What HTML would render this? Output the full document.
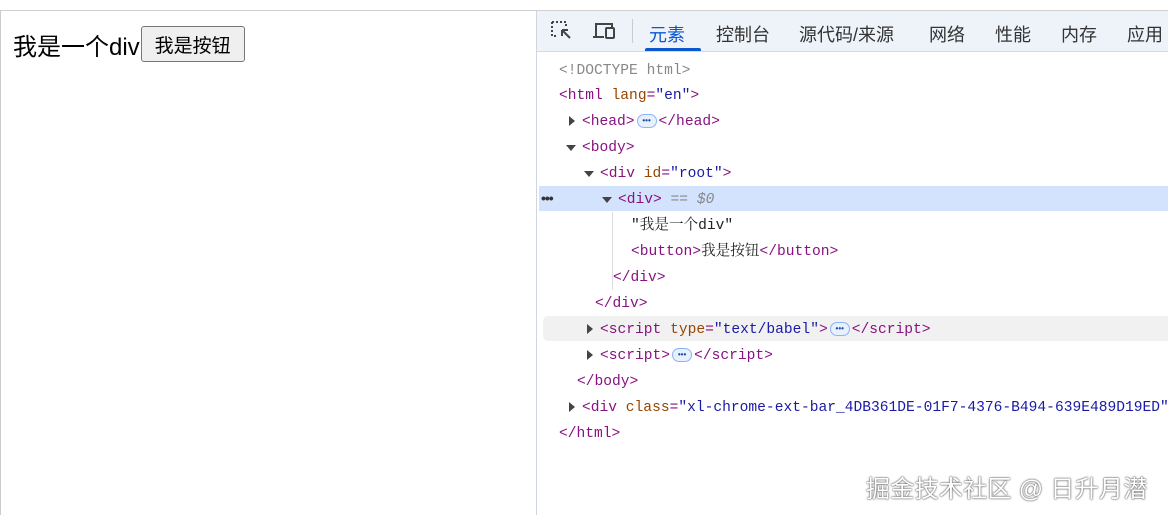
<!DOCTYPE html>
<html><head><meta charset="utf-8"><style>
body{margin:0;width:1168px;height:515px;overflow:hidden;background:#fff;position:relative;font-family:"Liberation Sans","Noto Sans CJK SC",sans-serif}
.topline{position:absolute;left:0;top:0;width:1168px;height:10px;border-bottom:1px solid #d0d0d0;background:#fff}
.leftline{position:absolute;left:0;top:10px;width:1px;height:505px;background:#ccc}
.page{position:absolute;left:13px;top:26px;font-size:24px;color:#000;display:flex;align-items:center;height:36px}
.btn{margin-left:1px;font-size:19px;width:104px;justify-content:center;border:1px solid #767676;border-radius:3px;background:#efefef;height:36px;box-sizing:border-box;display:flex;align-items:center}
.dev{position:absolute;left:536px;top:11px;width:632px;height:504px;border-left:1px solid #cfd6e0;background:#fff}
.bar{position:absolute;left:0;top:0;width:632px;height:40px;background:#eef3fa;border-bottom:1px solid #d5dbe4}
.tab{position:absolute;top:10px;font-size:18px;color:#333;white-space:nowrap}
.ul{position:absolute;left:108px;top:37px;width:56px;height:3px;background:#0b57d0;border-radius:2px 2px 0 0}
.ln{position:absolute;font-family:"Liberation Mono","Noto Serif CJK SC",monospace;font-size:14.6px;white-space:pre;color:#881280;line-height:20px}
.a{color:#994500}.v{color:#1a1aa6}.t{color:#222}.g{color:#888}
.tri{position:absolute;width:0;height:0}
.r{border-top:5px solid transparent;border-bottom:5px solid transparent;border-left:6px solid #444}
.d{border-left:5px solid transparent;border-right:5px solid transparent;border-top:6px solid #444}
.dots{display:inline-block;width:20px;height:14px;margin:0 2px;border:1px solid #8ab4f8;border-radius:7px;background:#e8f0fe;color:#1a4fa0;font-size:8px;line-height:12px;text-align:center;vertical-align:middle;box-sizing:border-box;font-family:"Liberation Sans",sans-serif;font-weight:bold}
.wm{position:absolute;left:866px;top:469px;font-size:24px;color:#fff;text-shadow:0 0 2px #555,0 0 1px #333;letter-spacing:0.3px}
</style></head><body>
<div class="topline"></div><div class="leftline"></div>
<div class="page">我是一个div<span class="btn">我是按钮</span></div>
<div class="dev">
 <div class="bar">
  <svg style="position:absolute;left:13px;top:9px" width="24" height="22" viewBox="0 0 24 22"><path d="M2 2h14v6M2 2v14h6" fill="none" stroke="#444" stroke-width="2" stroke-dasharray="2 2"/><path d="M12 10l8 8M12 10v6M12 10h6" stroke="#444" stroke-width="2" fill="none"/></svg>
  <svg style="position:absolute;left:55px;top:9px" width="26" height="22" viewBox="0 0 26 22"><path d="M4 16V4h16v3" fill="none" stroke="#444" stroke-width="2"/><path d="M1 17h11" stroke="#444" stroke-width="2"/><rect x="14" y="8" width="8" height="10" rx="1" fill="none" stroke="#444" stroke-width="2"/></svg>
  <div style="position:absolute;left:95px;top:8px;width:1px;height:24px;background:#c5ccd6"></div>
  <span class="tab" style="left:112px;color:#0b57d0">元素</span>
  <span class="tab" style="left:179px">控制台</span>
  <span class="tab" style="left:262px">源代码/来源</span>
  <span class="tab" style="left:392px">网络</span>
  <span class="tab" style="left:458px">性能</span>
  <span class="tab" style="left:524px">内存</span>
  <span class="tab" style="left:590px">应用</span>
  <div class="ul"></div>
 </div>
</div>
<div style="position:absolute;left:539px;top:186px;width:629px;height:25px;background:#d3e3fd"></div>
<div style="position:absolute;left:543px;top:316px;width:625px;height:25px;background:#f1f1f1;border-radius:5px 0 0 5px"></div>
<div style="position:absolute;left:541px;top:190px;font-size:14px;color:#333;font-weight:bold;letter-spacing:-1px">•••</div>
<div style="position:absolute;left:612px;top:212px;width:1px;height:78px;background:#ddd"></div>
<div class="ln g" style="left:559px;top:61px">&lt;!DOCTYPE html&gt;</div>
<div class="ln" style="left:559px;top:86px">&lt;html <span class="a">lang</span>=<span class="v">"en"</span>&gt;</div>
<div class="tri r" style="left:569px;top:116px"></div>
<div class="ln" style="left:582px;top:112px">&lt;head&gt;<span class="dots">•••</span>&lt;/head&gt;</div>
<div class="tri d" style="left:566px;top:145px"></div>
<div class="ln" style="left:582px;top:138px">&lt;body&gt;</div>
<div class="tri d" style="left:584px;top:171px"></div>
<div class="ln" style="left:600px;top:164px">&lt;div <span class="a">id</span>=<span class="v">"root"</span>&gt;</div>
<div class="tri d" style="left:602px;top:197px"></div>
<div class="ln" style="left:618px;top:190px">&lt;div&gt; <i class="g">== $0</i></div>
<div class="ln t" style="left:631px;top:216px">"我是一个div"</div>
<div class="ln" style="left:631px;top:242px">&lt;button&gt;<span class="t">我是按钮</span>&lt;/button&gt;</div>
<div class="ln" style="left:613px;top:268px">&lt;/div&gt;</div>
<div class="ln" style="left:595px;top:294px">&lt;/div&gt;</div>
<div class="tri r" style="left:587px;top:324px"></div>
<div class="ln" style="left:600px;top:320px">&lt;script <span class="a">type</span>=<span class="v">"text/babel"</span>&gt;<span class="dots">•••</span>&lt;/script&gt;</div>
<div class="tri r" style="left:587px;top:350px"></div>
<div class="ln" style="left:600px;top:346px">&lt;script&gt;<span class="dots">•••</span>&lt;/script&gt;</div>
<div class="ln" style="left:577px;top:372px">&lt;/body&gt;</div>
<div class="tri r" style="left:569px;top:402px"></div>
<div class="ln" style="left:582px;top:398px">&lt;div <span class="a">class</span>=<span class="v">"xl-chrome-ext-bar_4DB361DE-01F7-4376-B494-639E489D19ED"</span></div>
<div class="ln" style="left:559px;top:424px">&lt;/html&gt;</div>
<div class="wm">掘金技术社区 @ 日升月潜</div>
</body></html>
